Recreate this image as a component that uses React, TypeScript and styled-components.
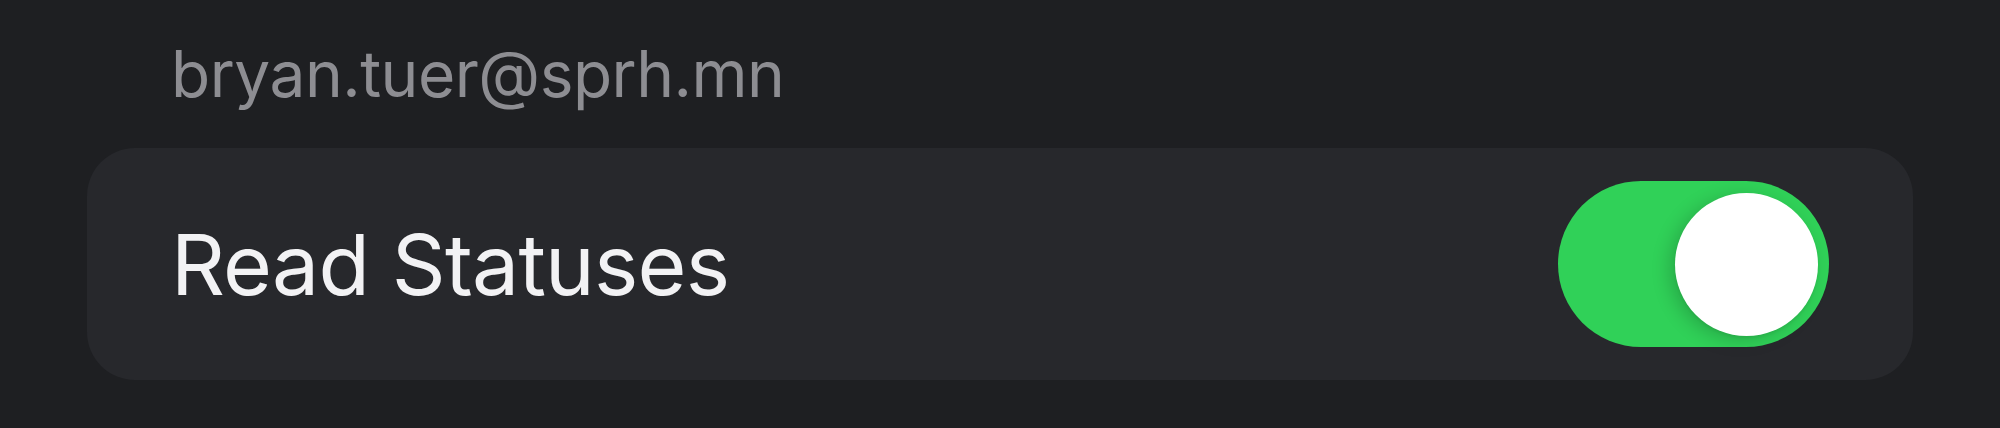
import React, { useState } from 'react';
import styled, { createGlobalStyle } from 'styled-components';

const BG = '#1e1f22';
const CARD = '#27282c';
const GREY = '#8d8d92';
const WHITE = '#f2f2f4';
const GREEN = '#30d158';

const GlobalStyle = createGlobalStyle`
  html, body {
    margin: 0;
    padding: 0;
    background: ${BG};
    font-family: Inter, "Noto Sans", "Liberation Sans", sans-serif;
    -webkit-font-smoothing: antialiased;
  }
`;

const Page = styled.div`
  width: 2000px;
  height: 428px;
  box-sizing: border-box;
  padding: 42px 87px 0;
  display: flex;
  flex-direction: column;
`;

const SectionHeader = styled.div`
  padding-left: 84px;
  font-size: 64px;
  line-height: 64px;
  letter-spacing: -0.5px;
  color: ${GREY};
  margin-bottom: 42px;
`;

const Card = styled.div`
  height: 232px;
  border-radius: 48px;
  background: ${CARD};
  padding: 0 84px;
  display: flex;
  align-items: center;
  justify-content: space-between;
`;

const RowLabel = styled.span`
  font-size: 84px;
  letter-spacing: -0.8px;
  color: ${WHITE};
`;

interface SwitchProps {
  on: boolean;
}

const Track = styled.button<SwitchProps>`
  width: 271px;
  height: 166px;
  border: none;
  border-radius: 83px;
  background: ${(props) => (props.on ? GREEN : '#39393d')};
  cursor: pointer;
  display: flex;
  align-items: center;
  justify-content: ${(props) => (props.on ? 'flex-end' : 'flex-start')};
  padding: 0 11px;
  box-sizing: border-box;
`;

const Knob = styled.span`
  width: 143px;
  height: 143px;
  border-radius: 50%;
  background: #ffffff;
  box-shadow: -6px 4px 18px rgba(0, 0, 0, 0.18), 0 2px 3px rgba(0, 0, 0, 0.06);
`;

const Toggle: React.FC<{ value: boolean; onChange: (v: boolean) => void }> = ({ value, onChange }) => (
  <Track on={value} onClick={() => onChange(!value)} aria-pressed={value}>
    <Knob />
  </Track>
);

export default function App() {
  const [readStatuses, setReadStatuses] = useState(true);

  return (
    <>
      <GlobalStyle />
      <Page>
        <SectionHeader>bryan.tuer@sprh.mn</SectionHeader>
        <Card>
          <RowLabel>Read Statuses</RowLabel>
          <Toggle value={readStatuses} onChange={setReadStatuses} />
        </Card>
      </Page>
    </>
  );
}
